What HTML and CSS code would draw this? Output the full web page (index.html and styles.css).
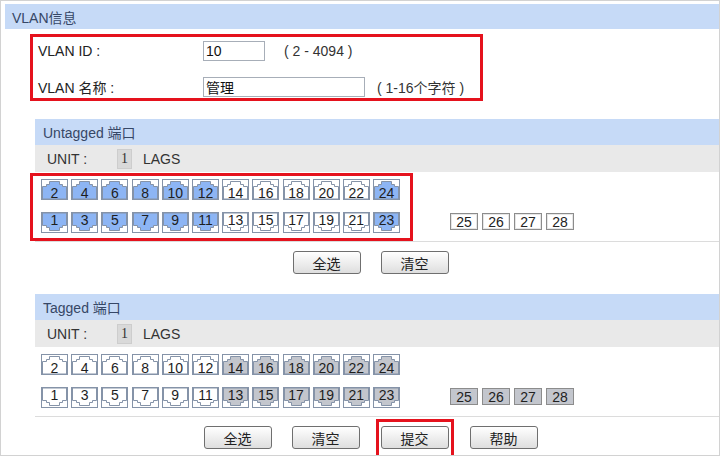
FILE: index.html
```html
<!DOCTYPE html>
<html lang="zh-CN">
<head>
  <meta charset="UTF-8">
  <title>VLAN 配置</title>
  <link rel="stylesheet" href="styles.css">
</head>
<body>

  <svg class="defs" width="0" height="0">
    <symbol id="jack" viewBox="0 0 27 21">
      <rect x="0.5" y="0.5" width="26" height="20" fill="#fff" stroke="#8593a8"/>
      <polygon points="1.5,20 1.5,7.5 5.5,7.5 5.5,5.5 8.5,5.5 8.5,2.5 18.5,2.5 18.5,5.5 21.5,5.5 21.5,7.5 25.5,7.5 25.5,20" fill="currentColor" stroke="#8593a8"/>
    </symbol>
  </svg>

  <div class="page">
    <div class="page-title">VLAN信息</div>

    <div class="vlan-box mark">
      <div class="field">
        <label for="vid">VLAN ID :</label>
        <input type="text" id="vid" class="id-input" value="10">
        <span class="hint">( 2 - 4094 )</span>
      </div>
      <div class="field">
        <label for="vname">VLAN 名称 :</label>
        <input type="text" id="vname" class="name-input" value="管理">
        <span class="hint hint-name">( 1-16个字符 )</span>
      </div>
    </div>

    <div class="section">
      <div class="sec-head">Untagged 端口</div>
      <div class="unit-row">
        <span class="unit-label">UNIT :</span>
        <span class="unit-num">1</span>
        <span>LAGS</span>
      </div>
      <div class="ports-area">
        <div class="port-frame mark">
          <div class="port-grid" id="untagged"></div>
        </div>
        <div class="lags" id="untaggedLags"></div>
      </div>
      <div class="btn-row">
        <button class="btn">全选</button>
        <button class="btn">清空</button>
      </div>
    </div>

    <div class="section section-tagged">
      <div class="sec-head">Tagged 端口</div>
      <div class="unit-row">
        <span class="unit-label">UNIT :</span>
        <span class="unit-num">1</span>
        <span>LAGS</span>
      </div>
      <div class="ports-area">
        <div class="port-frame">
          <div class="port-grid" id="tagged"></div>
        </div>
        <div class="lags" id="taggedLags"></div>
      </div>
      <div class="btn-row btn-row-last">
        <button class="btn">全选</button>
        <button class="btn">清空</button>
        <div class="submit-mark"><button class="btn">提交</button></div>
        <button class="btn">帮助</button>
      </div>
    </div>
  </div>

  <script>
    function buildPorts(gridId, stateOf) {
      const grid = document.getElementById(gridId);
      let html = "";
      for (let row = 0; row < 2; row++) {
        for (let i = 0; i < 12; i++) {
          const num = row === 0 ? (i + 1) * 2 : i * 2 + 1;
          const dir = row === 0 ? "up" : "down";
          html += `
            <div class="port ${dir} ${stateOf(num)}">
              <svg class="jack"><use href="#jack"></use></svg>
              <span>${num}</span>
            </div>
          `;
        }
      }
      grid.innerHTML = html;
    }

    function buildLags(id, state) {
      const box = document.getElementById(id);
      for (let n = 25; n <= 28; n++) {
        box.innerHTML += `<span class="lag ${state}">${n}</span>`;
      }
    }

    // untagged: 1-12 and 23-24 selected
    buildPorts("untagged", n => (n <= 12 || n >= 23) ? "on" : "");
    // tagged: 13-24 disabled (grey)
    buildPorts("tagged", n => n >= 13 ? "tag" : "");
    buildLags("untaggedLags", "");
    buildLags("taggedLags", "tag");
  </script>

</body>
</html>
```

FILE: styles.css
```css
body {
  margin: 0;
  font-family: "Liberation Sans", "Noto Sans CJK SC", sans-serif;
  font-size: 14px;
  color: #222;
  background: #fff;
}

.defs {
  position: absolute;
}

.page {
  box-sizing: border-box;
  width: 720px;
  height: 456px;
  border: 1px solid #d2d2d2;
  padding: 3px 0 0 4px;
  overflow: hidden;
}

.page-title,
.sec-head {
  background: #c6daf7;
  color: #364766;
  display: flex;
  align-items: center;
}

.page-title {
  height: 25px;
  padding-left: 7px;
}

.mark {
  border: 3px solid #e5121d;
}

/* VLAN id / name */
.vlan-box {
  width: 442px;
  margin: 5px 0 0 25px;
  padding: 4px 0 1px 5px;
  display: flex;
  flex-direction: column;
  gap: 16px;
}

.field {
  display: flex;
  align-items: center;
  height: 20px;
}

.field label {
  width: 165px;
}

.field input {
  box-sizing: border-box;
  height: 20px;
  border: 1px solid #a7aeb8;
  padding: 0 2px;
  font: inherit;
  color: #111;
}

.id-input {
  width: 62px;
}

.name-input {
  width: 162px;
}

.hint {
  margin-left: 19px;
  color: #333;
  white-space: pre;
}

.hint-name {
  margin-left: 12px;
}

/* port sections */
.section {
  margin: 18px 0 0 30px;
}

.section-tagged {
  margin-top: 0;
}

.sec-head {
  height: 26px;
  padding-left: 8px;
}

.unit-row {
  height: 27px;
  background: #e9e9e9;
  display: flex;
  align-items: center;
  padding-left: 12px;
  color: #333;
}

.unit-label {
  width: 70px;
}

.unit-num {
  box-sizing: border-box;
  width: 15px;
  height: 20px;
  margin-right: 11px;
  background: #d9d9d9;
  border: 1px solid #cdcdcd;
  display: flex;
  align-items: center;
  justify-content: center;
  font-family: "Liberation Serif", serif;
}

.ports-area {
  display: flex;
  align-items: flex-end;
  padding-top: 1px;
  border-bottom: 1px solid #dcdcdc;
}

.port-frame {
  margin-left: -5px;
  padding: 3px 10px 5px 8px;
  border: 3px solid transparent;
}

.port-frame.mark {
  border-color: #e5121d;
}

.port-grid {
  display: grid;
  grid-template-columns: repeat(12, 27px);
  column-gap: 3.2px;
  row-gap: 12px;
}

.port {
  position: relative;
  width: 27px;
  height: 21px;
  display: flex;
  align-items: center;
  justify-content: center;
  box-sizing: border-box;
}

.port.up {
  padding-top: 6px;
}

.port.down {
  padding-bottom: 5px;
}

.jack {
  position: absolute;
  left: 0;
  top: 0;
  width: 27px;
  height: 21px;
  color: #fff;
}

.port.down .jack {
  transform: scaleY(-1);
}

.port.on .jack {
  color: #8db5f4;
}

.port.tag .jack {
  color: #c3c6cd;
}

.port span {
  position: relative;
  color: #1e1e1e;
}

.lags {
  display: flex;
  gap: 4px;
  margin: 0 0 11px 37px;
}

.lag {
  box-sizing: border-box;
  width: 28px;
  height: 17px;
  border: 1px solid #8c8c8c;
  box-shadow: inset 0 0 0 1px #e6e6e6;
  display: flex;
  align-items: center;
  justify-content: center;
  background: #fff;
}

.lag.tag {
  background: #c3c6cd;
  box-shadow: none;
}

/* buttons */
.btn-row {
  height: 52px;
  display: flex;
  justify-content: center;
  align-items: flex-start;
  gap: 20px;
  padding: 9px 13px 0 0;
  box-sizing: border-box;
}

.btn-row-last {
  padding-top: 2px;
}

.btn-row-last > .btn {
  margin-top: 7px;
}

.btn {
  width: 68px;
  height: 23px;
  border: 1px solid #6f6f6f;
  border-radius: 3px;
  background: linear-gradient(#ffffff, #dedede);
  font-family: "Noto Sans CJK SC", sans-serif;
  font-size: 14px;
  color: #222;
  padding: 0;
}

.submit-mark {
  border: 3px solid #e5121d;
  border-bottom: none;
  padding: 4px 2px 8px;
  margin: 0 -4px;
}
```
